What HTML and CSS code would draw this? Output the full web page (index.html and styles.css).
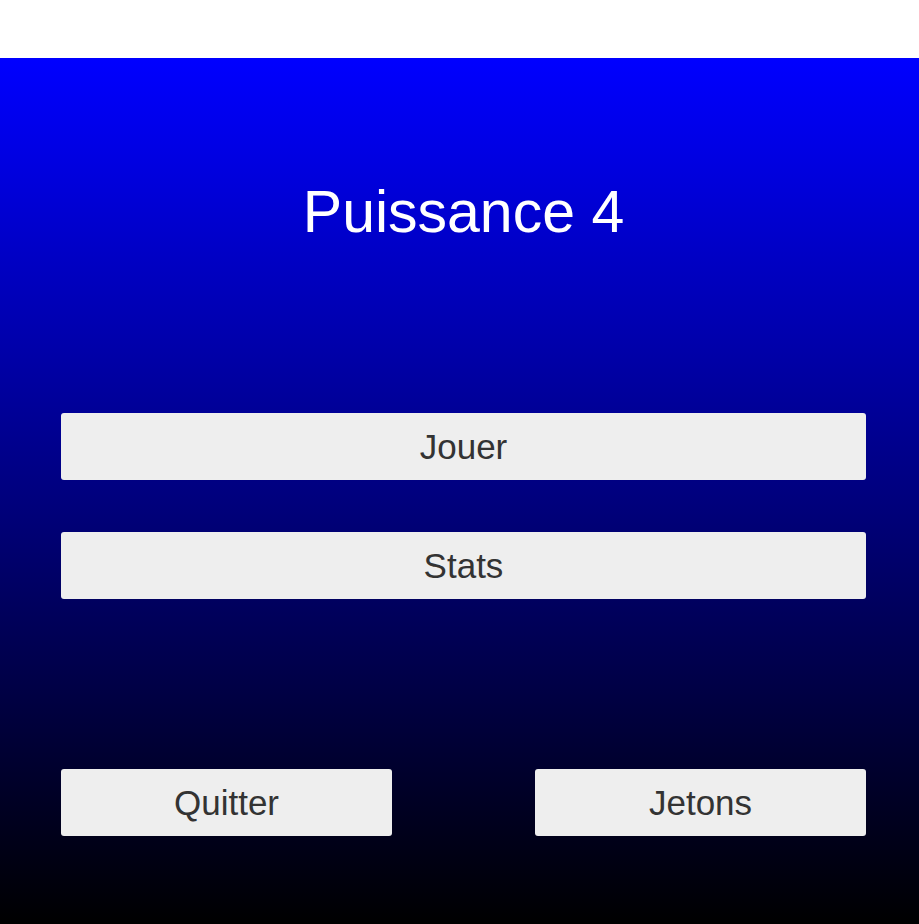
FILE: index.html
```html
<!DOCTYPE html>
<html lang="fr">
<head>
<meta charset="utf-8">
<title>Puissance 4</title>
<link rel="stylesheet" href="styles.css">
</head>
<body>
<div class="topbar"></div>
<main class="screen">
  <h1 class="title">Puissance 4</h1>
  <div class="menu">
    <button class="btn">Jouer</button>
    <button class="btn">Stats</button>
  </div>
  <div class="bottom-row">
    <button class="btn btn-half">Quitter</button>
    <button class="btn btn-half">Jetons</button>
  </div>
</main>
</body>
</html>
```
FILE: styles.css
```css
html, body {
  margin: 0;
  padding: 0;
  background: #000;
}
body {
  font-family: "Liberation Sans", Arial, sans-serif;
  overflow: hidden;
}
.topbar {
  height: 58px;
  background: #ffffff;
}
.screen {
  height: 866px;
  box-sizing: border-box;
  background: linear-gradient(to bottom, #0000ff 0%, #000000 100%);
  padding: 0 53px 0 61px;
  display: flex;
  flex-direction: column;
}
.title {
  margin: 121px 0 0 0;
  font-size: 59px;
  line-height: 66px;
  font-weight: normal;
  color: #ffffff;
  text-align: center;
}
.menu {
  margin-top: 168px;
  display: flex;
  flex-direction: column;
  gap: 52px;
}
.btn {
  height: 67px;
  border: none;
  border-radius: 3px;
  background: #eeeeee;
  color: #333333;
  font-family: "Liberation Sans", Arial, sans-serif;
  font-size: 35px;
  padding: 0;
  margin: 0;
}
.bottom-row {
  margin-top: 170px;
  display: flex;
  justify-content: space-between;
}
.btn-half {
  width: 331px;
}
```
